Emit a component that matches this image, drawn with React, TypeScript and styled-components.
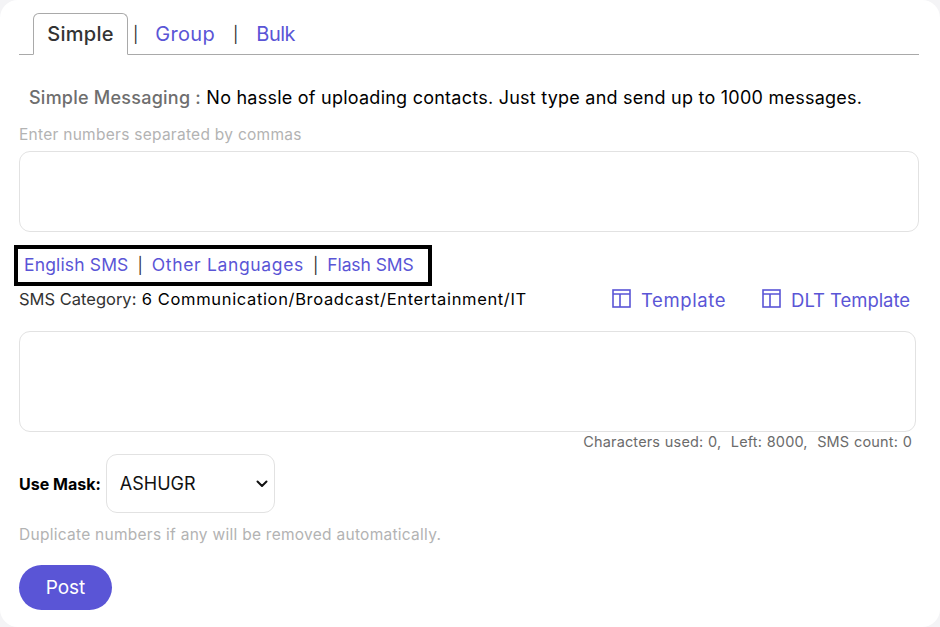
import { createGlobalStyle, styled } from 'styled-components'

const Global = createGlobalStyle`
  html, body {
    margin: 0;
    padding: 0;
    background: #f4f4f6;
  }
  body {
    font-family: Inter, "Open Sans", "Liberation Sans", sans-serif;
    overflow: hidden;
  }
`
const Card = styled.div`
  box-sizing: border-box;
  width: 940px;
  height: 627px;
  background: #fff;
  border-radius: 18px;
  padding: 13px 21px 0 19px;
  overflow: hidden;
`
const Tabs = styled.div`
  display: flex;
  align-items: flex-end;
  height: 41px;
  border-bottom: 1px solid #a9a9a9;
  padding-left: 14px;
`
const ActiveTab = styled.div`
  box-sizing: border-box;
  width: 95px;
  height: 42px;
  margin-bottom: -1px;
  padding-top: 8px;
  text-align: center;
  font-size: 20px;
  letter-spacing: 0.3px;
  font-weight: 500;
  color: #333;
  background: #fff;
  border: 1px solid #a9a9a9;
  border-bottom: 1px solid #fff;
  border-radius: 6px 6px 0 0;
`
const TabLinks = styled.div`
  display: flex;
  align-items: center;
  height: 41px;
  font-size: 20px;
  color: #5a55d6;
`
const Track = styled.span<{ $s: number }>`
  letter-spacing: ${(p) => p.$s}px;
`
const Pipe = styled.span<{ $left: number; $right: number }>`
  color: #333;
  font-size: 16px;
  margin: 0 ${(p) => p.$right}px 0 ${(p) => p.$left}px;
`
const Intro = styled.div`
  margin: 31px 0 0 10px;
  font-size: 18px;
  letter-spacing: 0.24px;
  line-height: 24px;
  color: #000;
`
const Muted = styled.span`
  color: #6e6e6e;
  font-weight: 500;
`
const Hint = styled.div`
  font-size: 15.5px;
  letter-spacing: 0.27px;
  line-height: 20px;
  color: #b3b3b3;
`
const Field = styled.div<{ $w: number; $h: number }>`
  box-sizing: border-box;
  width: ${(p) => p.$w}px;
  height: ${(p) => p.$h}px;
  background: #fff;
  border: 1px solid #e2e2e2;
  border-radius: 11px;
`
const NumbersHint = styled(Hint)`
  margin: 15px 0 6px;
`
const LangBox = styled.div`
  box-sizing: border-box;
  display: flex;
  align-items: center;
  width: 418px;
  height: 41px;
  margin: 13px 0 0 -5px;
  padding: 0 0 2px 6px;
  border: 4px solid #000;
  font-size: 17.5px;
  color: #5a55d6;
  white-space: nowrap;
`
const LangPipe = styled.span`
  color: #333;
  margin: 0 9px;
  font-size: 16px;
`
const CategoryRow = styled.div`
  display: flex;
  align-items: center;
  justify-content: space-between;
  height: 30px;
  margin-top: 1px;
  margin-right: 9px;
`
const Category = styled.div`
  font-size: 16.5px;
  letter-spacing: 0.65px;
  color: #000;
  white-space: nowrap;
  margin-top: -6px;
`
const CategoryLabel = styled.span`
  color: #333;
  letter-spacing: 0;
`
const TemplateLinks = styled.div`
  display: flex;
  gap: 36px;
  margin-top: -4px;
`
const TemplateLink = styled.div`
  display: flex;
  align-items: center;
  gap: 10px;
  font-size: 18.5px;
  color: #5a55d6;
`
const TemplateGlyph = styled.svg`
  margin-bottom: 4px;
`
const MessageWrap = styled.div`
  margin-top: 14px;
`
const Counter = styled.div`
  width: 893px;
  text-align: right;
  font-size: 14.5px;
  letter-spacing: 0.15px;
  line-height: 20px;
  color: #6b6b6b;
  word-spacing: 0.5px;
`
const MaskRow = styled.div`
  display: flex;
  align-items: center;
  gap: 5px;
  margin-top: 2px;
`
const MaskLabel = styled.div`
  font-size: 16px;
  font-weight: 700;
  color: #000;
`
const MaskSelect = styled.div`
  box-sizing: border-box;
  display: flex;
  align-items: center;
  justify-content: space-between;
  width: 169px;
  height: 59px;
  padding: 0 6px 0 13px;
  border: 1px solid #e2e2e2;
  border-radius: 11px;
  font-size: 18px;
  color: #111;
`
const DuplicateHint = styled(Hint)`
  margin-top: 12px;
`
const PostButton = styled.button`
  display: block;
  width: 93px;
  height: 45px;
  margin-top: 20px;
  padding: 0;
  border: none;
  border-radius: 23px;
  background: #5a55d6;
  color: #fff;
  font: inherit;
  font-size: 19px;
`

function TemplateIcon() {
  return (
    <TemplateGlyph width="19" height="19" viewBox="0 0 19 19" fill="none" stroke="#5a55d6" strokeWidth="1.6">
      <rect x="1" y="1" width="17" height="17" />
      <path d="M1 5h17M8 5v13" />
    </TemplateGlyph>
  )
}

function Chevron() {
  return (
    <svg width="12" height="8" viewBox="0 0 12 8" fill="none" stroke="#111" strokeWidth="2" strokeLinecap="round" strokeLinejoin="round">
      <path d="M1.5 1.5 6 6l4.5-4.5" />
    </svg>
  )
}

export default function App() {
  return (
    <Card>
      <Global />
      <Tabs>
        <ActiveTab>Simple</ActiveTab>
        <TabLinks>
          <Pipe $left={5} $right={17}>|</Pipe>
          <Track $s={0.3}>Group</Track>
          <Pipe $left={18} $right={18}>|</Pipe>
          <Track $s={-0.5}>Bulk</Track>
        </TabLinks>
      </Tabs>

      <Intro>
        <Muted>Simple Messaging :</Muted> No hassle of uploading contacts. Just type and send up to 1000 messages.
      </Intro>
      <NumbersHint>Enter numbers separated by commas</NumbersHint>
      <Field $w={900} $h={81} />

      <LangBox>
        <Track $s={0.15}>English SMS</Track>
        <LangPipe>|</LangPipe>
        <Track $s={0.65}>Other Languages</Track>
        <LangPipe>|</LangPipe>
        <Track $s={-0.08}>Flash SMS</Track>
      </LangBox>

      <CategoryRow>
        <Category>
          <CategoryLabel>SMS Category:</CategoryLabel> 6 Communication/Broadcast/Entertainment/IT
        </Category>
        <TemplateLinks>
          <TemplateLink>
            <TemplateIcon />
            <Track $s={0.6}>Template</Track>
          </TemplateLink>
          <TemplateLink>
            <TemplateIcon />
            <Track $s={-0.05}>DLT Template</Track>
          </TemplateLink>
        </TemplateLinks>
      </CategoryRow>

      <MessageWrap>
        <Field $w={897} $h={101} />
      </MessageWrap>
      <Counter>Characters used: 0,&nbsp; Left: 8000,&nbsp; SMS count: 0</Counter>

      <MaskRow>
        <MaskLabel>Use Mask:</MaskLabel>
        <MaskSelect>
          ASHUGR
          <Chevron />
        </MaskSelect>
      </MaskRow>

      <DuplicateHint>Duplicate numbers if any will be removed automatically.</DuplicateHint>
      <PostButton>Post</PostButton>
    </Card>
  )
}
